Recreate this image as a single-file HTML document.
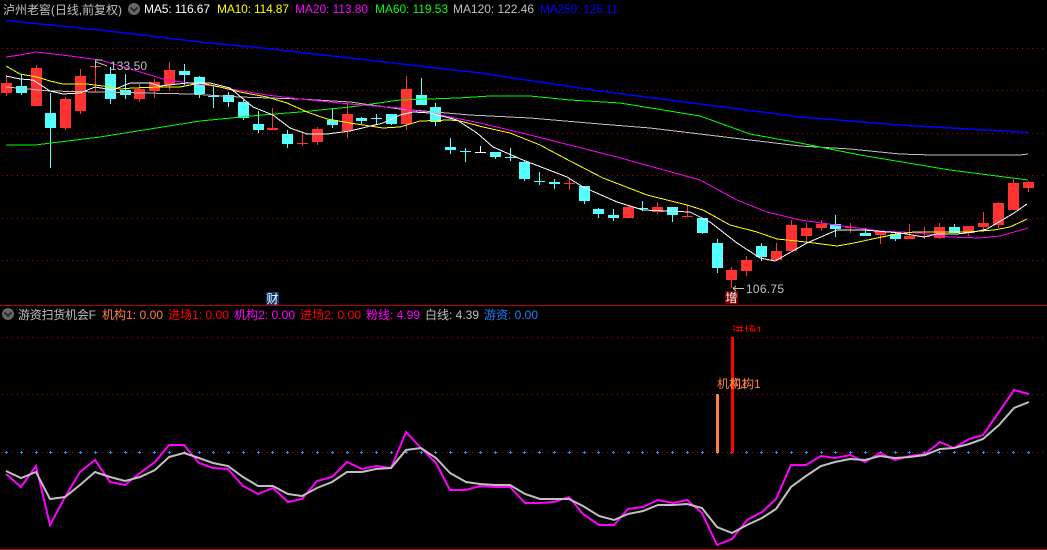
<!DOCTYPE html>
<html><head><meta charset="utf-8"><style>
html,body{margin:0;padding:0;background:#000;width:1047px;height:550px;overflow:hidden}
svg{position:absolute;left:0;top:0;display:block}
text{font-family:"WenQuanYi Zen Hei","Liberation Sans","Noto Sans CJK SC",sans-serif;font-size:12px}
.n{font-family:"Liberation Sans","WenQuanYi Zen Hei",sans-serif}
</style></head><body>
<svg width="1047" height="550" viewBox="0 0 1047 550" xmlns="http://www.w3.org/2000/svg">
<defs><clipPath id="c1"><rect x="730" y="324" width="32" height="8"/></clipPath></defs>
<g fill="none" stroke="#c00000" stroke-width="1" shape-rendering="crispEdges">
<path stroke-dasharray="1 4" d="M2 48.5H1047M2 90.5H1047M2 133.5H1047M2 175.5H1047M2 218.5H1047M2 260.5H1047M2 337.5H1047M2 394.5H1047M2 452.5H1047"/>
<path stroke="#b00000" d="M0 305.5H1047M0 549.5H1047"/>
</g>
<!-- red candles -->
<g shape-rendering="crispEdges">
<path fill="none" stroke="#ff3232" d="M6.5 75V96M36.5 65V106M65.5 97V130M80.5 69V114M95.5 60V92M139.5 84V102M154.5 79V98M169.5 62V91M272.5 108V130M302.5 131V146M317.5 127V145M347.5 103V138M406.5 76V130M569.5 179V190M628.5 206V218M657.5 202V214M687.5 205V217M731.5 267V288M746.5 256V276M776.5 243V260M791.5 220V251M806.5 223V243M821.5 220V231M850.5 223V233M880.5 231V244M909.5 224V239M924.5 227V239M939.5 223V239M968.5 226V236M983.5 212V229M998.5 202V228M1013.5 179V210M1028.5 181V192"/>
<path fill="#ff3232" d="M1 83h11v10H1zM31 68h11v38H31zM60 99h11v29H60zM75 76h11v35H75zM90 66h11v1H90zM134 89h11v10H134zM149 82h11v9H149zM164 70h11v15H164zM267 128h11v2H267zM297 143h11v1H297zM312 129h11v13H312zM342 114h11v17H342zM401 89h11v35H401zM564 183h11v1H564zM623 207h11v11H623zM652 207h11v5H652zM682 216h11v1H682zM726 270h11v10H726zM741 260h11v11H741zM771 251h11v9H771zM786 225h11v26H786zM801 228h11v8H801zM816 224h11v4H816zM845 227h11v1H845zM875 231h11v4H875zM904 236h11v3H904zM919 236h11v1H919zM934 227h11v11H934zM963 226h11v7H963zM978 223h11v4H978zM993 203h11v22H993zM1008 183h11v27H1008zM1023 182h11v6H1023z"/>
<path fill="none" stroke="#54ffff" d="M21.5 74V95M50.5 93V168M110.5 67V104M125.5 74V99M184.5 64V85M199.5 76V98M213.5 87V108M228.5 92V107M243.5 100V120M258.5 111V133M287.5 130V148M332.5 108V128M361.5 117V124M376.5 114V125M391.5 114V125M421.5 78V105M435.5 103V126M450.5 138V154M465.5 148V162M495.5 152V159M510.5 148V161M524.5 160V181M539.5 172V185M554.5 179V189M584.5 186V204M598.5 208V218M613.5 209V221M642.5 201V211M672.5 207V222M702.5 218V234M717.5 239V273M761.5 243V261M835.5 215V237M865.5 228V236M895.5 232V241M954.5 224V233"/>
<path fill="#54ffff" d="M16 86h11v7H16zM45 113h11v15H45zM105 74h11v25H105zM120 90h11v5H120zM179 71h11v4H179zM194 77h11v17H194zM208 96h11v1H208zM223 95h11v7H223zM238 102h11v16H238zM253 124h11v6H253zM282 134h11v10H282zM327 120h11v5H327zM356 118h11v3H356zM371 118h11v1H371zM386 114h11v10H386zM416 95h11v10H416zM430 107h11v15H430zM445 147h11v3H445zM460 151h11v1H460zM490 152h11v5H490zM505 157h11v1H505zM519 162h11v17H519zM534 181h11v1H534zM549 182h11v2H549zM579 186h11v15H579zM593 209h11v5H593zM608 215h11v3H608zM637 208h11v1H637zM667 207h11v8H667zM697 218h11v15H697zM712 243h11v25H712zM756 246h11v11H756zM830 224h11v5H830zM860 233h11v3H860zM890 234h11v5H890zM949 227h11v6H949z"/>
<path fill="none" stroke="#fff" d="M480.5 146V153M475 152.5H486"/>
</g>
<!-- MAs -->
<g fill="none" stroke-width="1" shape-rendering="crispEdges">
<polyline stroke="#0000ff" stroke-width="1.5" points="6,20.5 100,30 200,42 262,48 350,58 480,73 600,91 700,104 800,117 900,125 1028,132.5"/>
<polyline stroke="#c0c0c0" points="6,87 50,91 100,92 190,94 240,97 300,99 350,102 400,109 470,115 530,118 600,124 650,128 700,134 800,146 850,149 900,154 932,155 1020,155 1028,154"/>
<polyline stroke="#00ff00" points="6,145 35,145 100,137 200,121 262,115 300,112 350,107 400,100 458,98 490,96 530,96 570,100 620,103 700,116 725,125 750,134 800,143 860,155 950,170 1028,180"/>
<polyline stroke="#ff00ff" points="6,57 20,55 36,52 70,56 100,60 117,65 150,75 167,80 213,86 267,95 300,99 350,104 400,108 435,114 480,123 530,135 617,157 700,180 737,200 767,212 800,220 850,227 880,231 920,233 950,237 980,238 1000,236 1028,228"/>
<polyline stroke="#ffff00" points="6,66 20,74 37,77 50,81 63,84 87,84 103,86 120,89 133,88 160,87 180,87 200,83 220,87 240,92 267,97 287,103 307,112 327,119 350,123 383,128 400,127 420,121 450,120 460,121 483,127 510,133 540,145 570,161 603,178 647,195 687,205 703,210 730,225 757,232 777,239 797,241 814,243 837,246 854,243 877,238 897,234 914,232 947,232 967,232 994,230 1010,227 1027,219"/>
<polyline stroke="#ffffff" points="6,76 20,79 33,80 50,91 63,94 80,93 95,87 113,90 130,83 150,83 160,86 187,83 210,83 230,88 253,107 273,115 290,128 307,134 327,134 350,131 383,123 400,115 413,112 430,113 457,120 477,133 493,147 523,160 567,177 583,187 617,202 643,210 690,212 710,222 737,243 760,258 775,261 807,243 837,230 864,230 900,233 924,237 937,234 957,234 974,232 987,229 1014,213 1027,204"/>
</g>
<!-- chart labels -->
<g fill="none" stroke="#c0c0c0" stroke-width="1" shape-rendering="crispEdges">
<path d="M95.5 60V68M95.5 60H102M96 62L107 66"/>
<path d="M733 288.5H744M733 288.5L736 286M733 288.5L736 291"/>
</g>
<text class="n" x="110" y="70" fill="#c0c0c0" textLength="37" lengthAdjust="spacing">133.50</text>
<text class="n" x="746" y="293" fill="#c0c0c0" textLength="38" lengthAdjust="spacing">106.75</text>
<rect x="266" y="292" width="13" height="13" fill="#0a3a6e"/>
<text x="266.5" y="303" fill="#fff">财</text>
<rect x="725" y="291" width="13" height="13" fill="#800000"/>
<text x="725.5" y="302" fill="#fff">增</text>
<!-- header -->
<circle cx="134" cy="9" r="6" fill="#666"/>
<path d="M130.5 7.5L134 11L137.5 7.5" fill="none" stroke="#222" stroke-width="1.6"/>
<text x="3" y="14" fill="#c0c0c0" textLength="119" lengthAdjust="spacing">泸州老窖(日线,前复权)</text>
<text class="n" x="144" y="13" fill="#ffffff" textLength="66" lengthAdjust="spacing">MA5: 116.67</text>
<text class="n" x="217" y="13" fill="#ffff00" textLength="72" lengthAdjust="spacing">MA10: 114.87</text>
<text class="n" x="295" y="13" fill="#ff00ff" textLength="73" lengthAdjust="spacing">MA20: 113.80</text>
<text class="n" x="375" y="13" fill="#00ff00" textLength="73" lengthAdjust="spacing">MA60: 119.53</text>
<text class="n" x="453" y="13" fill="#c0c0c0" textLength="81" lengthAdjust="spacing">MA120: 122.46</text>
<text class="n" x="540" y="13" fill="#0000ff" textLength="78" lengthAdjust="spacing">MA250: 125.11</text>
<!-- lower panel header -->
<circle cx="8" cy="314" r="6" fill="#666"/>
<path d="M4.5 312.5L8 316L11.5 312.5" fill="none" stroke="#222" stroke-width="1.6"/>
<text x="18" y="319" fill="#c0c0c0" textLength="78" lengthAdjust="spacing">游资扫货机会F</text>
<text x="102" y="319" fill="#ff8040" textLength="61" lengthAdjust="spacing">机构1: 0.00</text>
<text x="168" y="319" fill="#ff0000" textLength="61" lengthAdjust="spacing">进场1: 0.00</text>
<text x="234" y="319" fill="#ff00ff" textLength="61" lengthAdjust="spacing">机构2: 0.00</text>
<text x="300" y="319" fill="#ff0000" textLength="61" lengthAdjust="spacing">进场2: 0.00</text>
<text x="366" y="319" fill="#ff00ff" textLength="54" lengthAdjust="spacing">粉线: 4.99</text>
<text x="425" y="319" fill="#c0c0c0" textLength="54" lengthAdjust="spacing">白线: 4.39</text>
<text x="484" y="319" fill="#1e80ff" textLength="54" lengthAdjust="spacing">游资: 0.00</text>
<!-- lower panel -->
<path fill="none" stroke="#1e90ff" shape-rendering="crispEdges" d="M5 452.5h3M6.5 451v3M20 452.5h3M21.5 451v3M35 452.5h3M36.5 451v3M49 452.5h3M50.5 451v3M64 452.5h3M65.5 451v3M79 452.5h3M80.5 451v3M94 452.5h3M95.5 451v3M109 452.5h3M110.5 451v3M124 452.5h3M125.5 451v3M138 452.5h3M139.5 451v3M153 452.5h3M154.5 451v3M168 452.5h3M169.5 451v3M183 452.5h3M184.5 451v3M198 452.5h3M199.5 451v3M212 452.5h3M213.5 451v3M227 452.5h3M228.5 451v3M242 452.5h3M243.5 451v3M257 452.5h3M258.5 451v3M271 452.5h3M272.5 451v3M286 452.5h3M287.5 451v3M301 452.5h3M302.5 451v3M316 452.5h3M317.5 451v3M331 452.5h3M332.5 451v3M346 452.5h3M347.5 451v3M360 452.5h3M361.5 451v3M375 452.5h3M376.5 451v3M390 452.5h3M391.5 451v3M405 452.5h3M406.5 451v3M420 452.5h3M421.5 451v3M434 452.5h3M435.5 451v3M449 452.5h3M450.5 451v3M464 452.5h3M465.5 451v3M479 452.5h3M480.5 451v3M494 452.5h3M495.5 451v3M509 452.5h3M510.5 451v3M523 452.5h3M524.5 451v3M538 452.5h3M539.5 451v3M553 452.5h3M554.5 451v3M568 452.5h3M569.5 451v3M583 452.5h3M584.5 451v3M597 452.5h3M598.5 451v3M612 452.5h3M613.5 451v3M627 452.5h3M628.5 451v3M641 452.5h3M642.5 451v3M656 452.5h3M657.5 451v3M671 452.5h3M672.5 451v3M686 452.5h3M687.5 451v3M701 452.5h3M702.5 451v3M716 452.5h3M717.5 451v3M730 452.5h3M731.5 451v3M745 452.5h3M746.5 451v3M760 452.5h3M761.5 451v3M775 452.5h3M776.5 451v3M790 452.5h3M791.5 451v3M805 452.5h3M806.5 451v3M820 452.5h3M821.5 451v3M834 452.5h3M835.5 451v3M849 452.5h3M850.5 451v3M864 452.5h3M865.5 451v3M879 452.5h3M880.5 451v3M894 452.5h3M895.5 451v3M908 452.5h3M909.5 451v3M923 452.5h3M924.5 451v3M938 452.5h3M939.5 451v3M953 452.5h3M954.5 451v3M967 452.5h3M968.5 451v3M982 452.5h3M983.5 451v3M997 452.5h3M998.5 451v3M1012 452.5h3M1013.5 451v3M1027 452.5h3M1028.5 451v3"/>
<rect x="716" y="394" width="3" height="59" fill="#ff7f40"/>
<rect x="731" y="337" width="3" height="116" fill="#ff0000"/>
<text x="717" y="388" fill="#ff8040">机构1</text>
<text x="730" y="388" fill="#ff8040">机构1</text>
<g clip-path="url(#c1)"><text x="732" y="335" fill="#ff0000">进场1</text></g>
<polyline fill="none" stroke="#ff00ff" stroke-width="2" points="6,474 21,487 36,466 50,525 65,497 80,472 95,460 110,482 125,485 140,473 155,462 169,445 184,445 199,463 213,468 228,469 243,486 258,494 273,488 288,502 302,499 317,481 332,477 347,462 362,469 376,466 391,468 406,432 421,448 436,463 450,490 466,490 480,486 495,487 510,487 525,503 540,503 554,502 569,497 583,514 599,525 614,525 628,509 643,507 658,500 673,503 687,500 702,513 717,545 732,539 747,520 762,512 776,499 791,465 806,465 821,456 835,458 850,455 865,462 880,453 895,460 910,456 925,454 940,442 954,448 969,439 983,435 999,412 1014,390 1029,394"/>
<polyline fill="none" stroke="#c0c0c0" stroke-width="2" points="6,471 21,478 36,472 50,499 65,497 80,485 95,472 110,477 125,481 140,477 155,470 169,457 184,453 199,458 213,463 228,466 243,477 258,486 273,486 288,494 302,496 317,488 332,482 347,472 362,472 376,469 391,468 406,450 421,448 436,458 450,473 466,482 480,484 495,485 510,485 525,494 540,499 554,499 569,499 583,506 599,516 614,520 628,514 643,511 658,505 673,505 687,504 702,508 717,527 732,533 747,525 762,518 776,509 791,487 806,476 821,466 835,462 850,459 865,460 880,456 895,458 910,457 925,455 940,449 954,448 969,444 983,439 999,425 1014,408 1029,402"/>
</svg>
</body></html>
